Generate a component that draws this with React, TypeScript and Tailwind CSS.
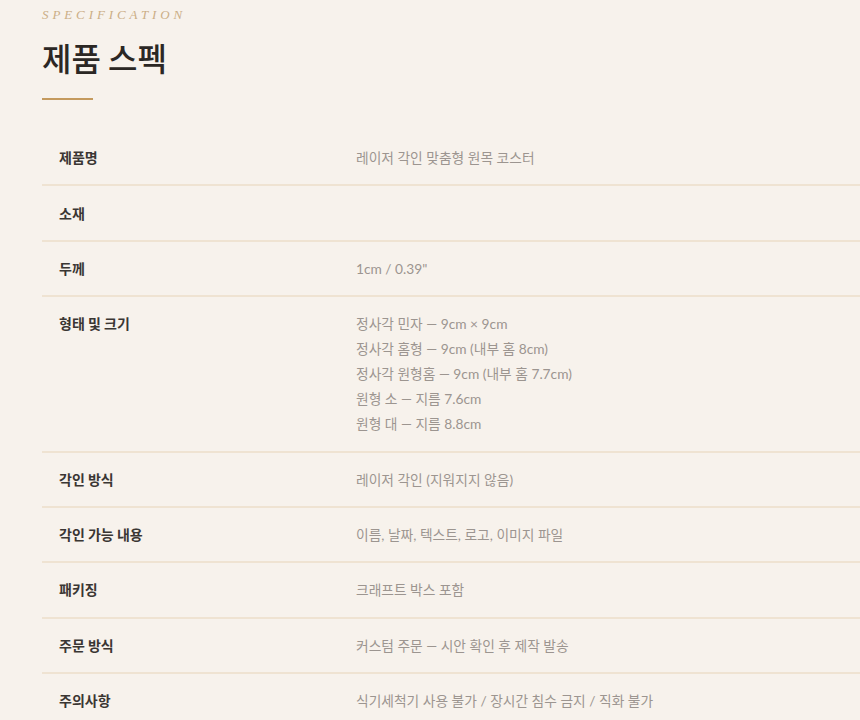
const specs: { label: string; value: string[] }[] = [
  { label: "제품명", value: ["레이저 각인 맞춤형 원목 코스터"] },
  { label: "소재", value: [""] },
  { label: "두께", value: ["1cm / 0.39\""] },
  {
    label: "형태 및 크기",
    value: [
      "정사각 민자 — 9cm × 9cm",
      "정사각 홈형 — 9cm (내부 홈 8cm)",
      "정사각 원형홈 — 9cm (내부 홈 7.7cm)",
      "원형 소 — 지름 7.6cm",
      "원형 대 — 지름 8.8cm",
    ],
  },
  { label: "각인 방식", value: ["레이저 각인 (지워지지 않음)"] },
  { label: "각인 가능 내용", value: ["이름, 날짜, 텍스트, 로고, 이미지 파일"] },
  { label: "패키징", value: ["크래프트 박스 포함"] },
  { label: "주문 방식", value: ["커스텀 주문 — 시안 확인 후 제작 발송"] },
  { label: "주의사항", value: ["식기세척기 사용 불가 / 장시간 침수 금지 / 직화 불가"] },
];

const App = () => {
  return (
    <div className="min-h-[720px] w-full overflow-hidden bg-[#f7f2ec] pl-[42px]">
      <div className="pt-[6px] font-['Liberation_Serif',serif] text-[13px] italic leading-[17px] tracking-[0.3em] text-[#cbae86]">
        SPECIFICATION
      </div>
      <h2 className="mt-[15px] font-['Noto_Sans_CJK_KR',sans-serif] text-[32px] font-medium leading-[38px] text-[#2b2724]">
        제품 스펙
      </h2>
      <div className="mt-[22px] h-[2px] w-[51px] bg-[#c49a5e]" />

      <div className="mt-[31px]">
        {specs.map((row) => (
          <div
            key={row.label}
            className="grid grid-cols-[314px_1fr] border-b-2 border-[#efe3d2] py-[14.2px]"
          >
            <div className="pl-[17px] font-['Noto_Sans_CJK_KR',sans-serif] text-[14px] font-bold leading-[25px] text-[#3a3633]">
              {row.label}
            </div>
            <div className="font-['Lato','Noto_Sans_CJK_KR',sans-serif] text-[13.75px] leading-[25px] text-[#9c9590]">
              {row.value.map((line, i) => (
                <div key={i} className="min-h-[25px]">
                  {line}
                </div>
              ))}
            </div>
          </div>
        ))}
      </div>
    </div>
  );
};

export default App;
